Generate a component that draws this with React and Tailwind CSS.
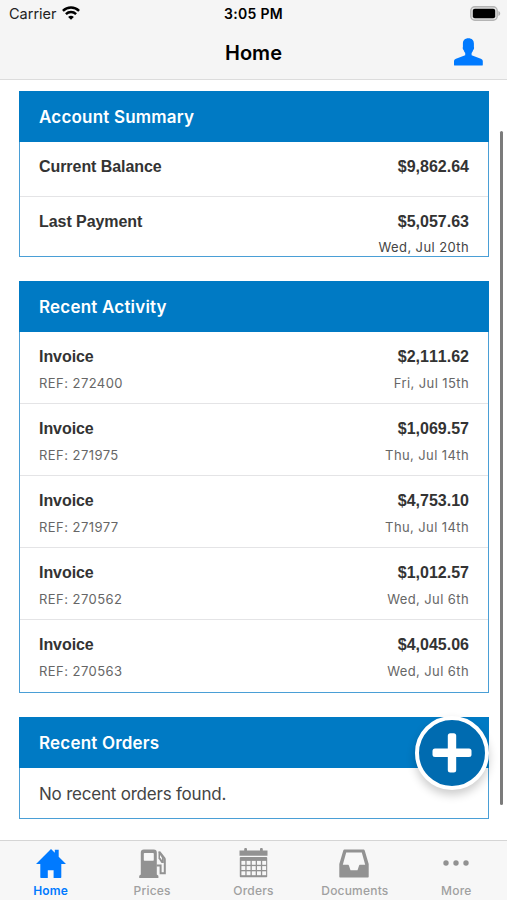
const UI = "font-['Inter','Roboto',sans-serif]";

const C = { blue: "#007aff", gray: "#929292" };

const summary = [
  { label: "Current Balance", amount: "$9,862.64" },
  { label: "Last Payment", amount: "$5,057.63", date: "Wed, Jul 20th" },
];

const activity = [
  { ref: "272400", amount: "$2,111.62", date: "Fri, Jul 15th" },
  { ref: "271975", amount: "$1,069.57", date: "Thu, Jul 14th" },
  { ref: "271977", amount: "$4,753.10", date: "Thu, Jul 14th" },
  { ref: "270562", amount: "$1,012.57", date: "Wed, Jul 6th" },
  { ref: "270563", amount: "$4,045.06", date: "Wed, Jul 6th" },
];

function WifiIcon() {
  return (
    <svg width="18" height="14" viewBox="0 0 18 14" fill="none" stroke="#000" strokeWidth="2.5" className="-mt-[3px]">
      <path d="M.9 4.800C5.500.5 12.500.5 17.100 4.800" />
      <path d="M3.900 8.100c2.900-2.700 7.300-2.700 10.200 0" />
      <path d="M9 13.800 6.100 10.900c1.700-1.500 4.100-1.500 5.800 0z" fill="#000" stroke="none" />
    </svg>
  );
}

function BatteryIcon() {
  return (
    <svg width="31" height="15" viewBox="0 0 31 15" className="-mt-[2px]">
      <rect x=".8" y=".8" width="26.400" height="13.400" rx="4" fill="#e4e4e4" stroke="#b4b4b4" strokeWidth="1.400" />
      <rect x="2.800" y="2.800" width="22.400" height="9.400" rx="2" fill="#000" />
      <path d="M28.400 5c2.400.8 2.400 4.200 0 5z" fill="#b0b0b0" />
    </svg>
  );
}

function PersonIcon() {
  return (
    <svg width="29" height="28" viewBox="0 0 29 28" fill={C.blue} className="-mt-[2px]">
      <path d="M14.400.2C10.800.2 8.900 2.300 8.900 5.500V9c-.5.700 0 2.600.8 3.200.3 1.200.8 2 1.500 2.800v2.200L2 20.800C.6 21.400 0 22.200 0 23.200v3.500c0 .6.300.9.900.9h27c.6 0 .9-.3.900-.9v-3.500c0-1-.6-1.800-2-2.400l-9.200-3.600V15c.7-.8 1.200-1.600 1.500-2.800.8-.6 1.300-2.500.8-3.200V5.500C19.900 2.300 18 .2 14.400.2z" />
    </svg>
  );
}

function HomeIcon() {
  return (
    <svg width="30" height="29" viewBox="0 0 30 29" fill={C.blue} className="ml-px">
      <path d="M15 0 0 15h4.300v13.300c0 .4.200.7.700.7h6.800v-7.800h5.800V29h7c.5 0 .7-.3.700-.7V15H30l-7.300-7.300V.8h-3.900v3z" />
    </svg>
  );
}

function FuelIcon() {
  return (
    <svg width="28" height="29" viewBox="0 0 28 29" fill={C.gray} className="ml-px">
      <path fillRule="evenodd" d="M4.800.5h10c2 0 3 1 3 3V25.500l1.600 1.300V29H.2v-2.200l1.600-1.300V3.500c0-2 1-3 3-3zM5.800 4c-.6 0-1 .4-1 1v5.800c0 .6.400 1 1 1h8c.6 0 1-.4 1-1V5c0-.6-.4-1-1-1z" />
      <path d="m20.200 2.700 5 6.200c.4.500.6 1 .6 1.600V24.300h-4.200V16.500h-4" fill="none" stroke={C.gray} strokeWidth="2" />
      <path d="m19.500 2 5.300 7v5h-2.300l-3-4.500z" />
      <path d="m21 6 2 2.700v2.600l-2-3z" fill="#f7f7f7" />
    </svg>
  );
}

function CalendarIcon() {
  const cols = [2.400, 7.600, 12.800, 18, 23.200];
  const rows = [12.900, 18.100, 23.300];
  return (
    <svg width="29" height="30" viewBox="0 0 29 30" className="-mt-px">
      <path d="M.5 2.500h4.700V1c0-1.300 2.800-1.300 2.800 0v1.500h13V1c0-1.300 2.800-1.300 2.800 0v1.500h4.700V7.700H.5z" fill={C.gray} />
      <rect x=".8" y="8.900" width="27.400" height="20.400" rx=".8" fill={C.gray} />
      {rows.map((y) => cols.map((x) => (
        <rect key={`${x}-${y}`} x={x} y={y} width="3.900" height="3.900" fill="#f7f7f7" />
      )))}
    </svg>
  );
}

function InboxIcon() {
  return (
    <svg width="30" height="29" viewBox="0 0 30 29" fill={C.gray} className="-ml-px">
      <path fillRule="evenodd" d="M6 .5h18c1 0 1.600.4 1.800 1.300L29.700 15v12.500c0 .7-.3 1-1 1H1.300c-.7 0-1-.3-1-1V15L4.200 1.800C4.400.9 5 .5 6 .5zM7.200 3.500 3.800 15.800h4.900c.8 0 1 .3 1.300 1l1.500 4.400h7l1.500-4.400c.3-.7.5-1 1.300-1h4.900L22.800 3.500z" />
    </svg>
  );
}

function MoreIcon() {
  return (
    <svg width="26" height="6" viewBox="0 0 26 6" fill={C.gray} className="-mt-px">
      <circle cx="3" cy="3" r="2.700" />
      <circle cx="13" cy="3" r="2.700" />
      <circle cx="23" cy="3" r="2.700" />
    </svg>
  );
}

const tabs = [
  { name: "Home", icon: HomeIcon, active: true },
  { name: "Prices", icon: FuelIcon },
  { name: "Orders", icon: CalendarIcon },
  { name: "Documents", icon: InboxIcon },
  { name: "More", icon: MoreIcon },
];

function Card({ title, className, children }) {
  return (
    <section className={`border border-[#4a9fd6] bg-white ${className}`}>
      <h2 className="-mx-px -mt-px flex h-[51px] items-center bg-[#007ac4] px-5 pt-[2px] text-[17px] font-semibold tracking-[0.2px] text-white">
        {title}
      </h2>
      {children}
    </section>
  );
}

function Row({ label, sub, amount, date, dark, className }) {
  return (
    <div className={`flex justify-between border-[#e4e4e6] px-[19px] pt-[13px] ${className}`}>
      <div>
        <p className="font-['Liberation_Sans',sans-serif] text-[16px] leading-6 font-bold tracking-[-0.06px] text-[#333]">{label}</p>
        {sub && <p className="mt-[3px] text-[13px] leading-[22px] tracking-[0.450px] text-[#666]">{sub}</p>}
      </div>
      <div className="text-right">
        <p className="font-['Liberation_Sans',sans-serif] text-[16px] leading-6 font-bold text-[#333] [font-kerning:none]">{amount}</p>
        {date && <p className={`text-[13px] leading-[22px] tracking-[0.4px] ${dark ? "mt-[2px] text-[#444]" : "mt-[3px] text-[#666]"}`}>{date}</p>}
      </div>
    </div>
  );
}

export default function App() {
  return (
    <div className={`relative flex h-[900px] w-[507px] flex-col overflow-hidden bg-white ${UI}`}>
      <header className="h-20 shrink-0 border-b border-[#dcdcdc] bg-[#f5f5f5]">
        <div className="grid h-7 grid-cols-3 items-center pr-[6px] pl-[9px]">
          <div className="flex items-center gap-[5px] text-[14.500px] text-[#222]">
            <span>Carrier</span>
            <WifiIcon />
          </div>
          <p className="-mt-px -ml-[3px] text-center text-[14px] font-semibold tracking-[0.3px] whitespace-nowrap text-black">3:05 PM</p>
          <div className="flex justify-end"><BatteryIcon /></div>
        </div>
        <div className="grid h-[50px] grid-cols-3 items-center pr-6 pl-6">
          <span />
          <h1 className="-mt-px text-center text-[20px] font-semibold text-black">Home</h1>
          <div className="flex justify-end"><PersonIcon /></div>
        </div>
      </header>

      <main className="flex h-[760px] flex-col gap-6 pt-[11px] pr-[18px] pl-[19px]">
        <Card title="Account Summary" className="h-[166px]">
          <Row {...summary[0]} className="h-[55px] border-b" />
          <Row {...summary[1]} dark className="h-[59px]" />
        </Card>

        <Card title="Recent Activity" className="h-[412px]">
          {activity.map((a, i) => (
            <Row key={a.ref} label="Invoice" sub={`REF: ${a.ref}`} amount={a.amount} date={a.date}
              className={i < activity.length - 1 ? "h-[72px] border-b" : "h-[71px]"} />
          ))}
        </Card>

        <Card title="Recent Orders" className="h-[102px]">
          <p className="px-[19px] pt-[13px] text-[17px] leading-[26px] tracking-[-0.210px] text-[#444]">No recent orders found.</p>
        </Card>
      </main>

      <div className="absolute top-[131px] right-1 h-[674px] w-[3px] rounded-full bg-[#7b7b7b]" />

      <button aria-label="Add" className="absolute top-[716px] left-[415px] flex size-[74px] items-center justify-center rounded-full border-4 border-white bg-[#006bb0] shadow-[0_5px_10px_rgba(0,0,0,0.2)]">
        <svg width="40" height="40" viewBox="0 0 40 40" fill="#fff">
          <rect x="15.800" y=".2" width="8.400" height="39.200" rx="2.500" />
          <rect x=".5" y="15.600" width="39" height="8.400" rx="2.500" />
        </svg>
      </button>

      <nav className="grid h-[60px] shrink-0 grid-cols-5 border-t border-[#d5d5d5] bg-[#f7f7f7]">
        {tabs.map(({ name, icon: Icon, active }) => (
          <div key={name} className="flex flex-col items-center pt-[7px]">
            <div className="flex h-[31px] items-center"><Icon /></div>
            <span className={`mt-1 text-[12px] leading-4 tracking-[0.2px] ${active ? "font-semibold text-[#007aff]" : "font-medium text-[#a0a0a0]"}`}>{name}</span>
          </div>
        ))}
      </nav>
    </div>
  );
}
